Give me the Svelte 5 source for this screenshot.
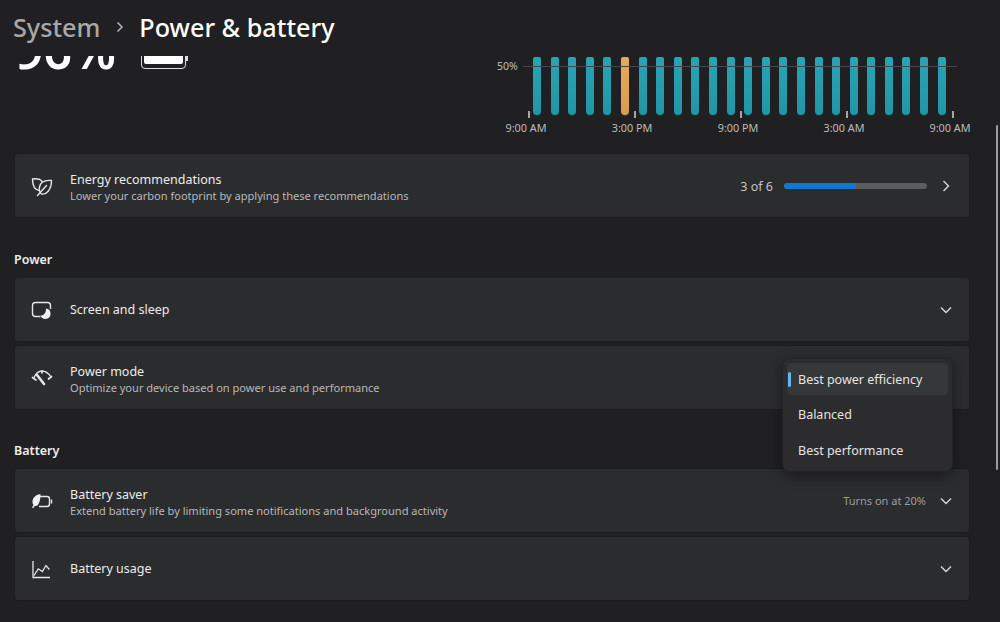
<script>
  const bars = Array.from({ length: 24 }, (_, i) => i);
  const times = ['9:00 AM', '3:00 PM', '9:00 PM', '3:00 AM', '9:00 AM'];
  const options = ['Best power efficiency', 'Balanced', 'Best performance'];
</script>

<div class="page">
  <header class="top">
    <span class="crumb">System</span>
    <svg class="sep" width="12" height="14" viewBox="0 0 12 14"><path d="M3.500 2.500 8 7l-4.500 4.500" fill="none" stroke="#b5b5b5" stroke-width="1.500"/></svg>
    <span class="current">Power &amp; battery</span>
  </header>

  <main class="body">
    <section class="hero">
      <div class="status">
        <span class="pct">96%</span>
        <div class="batt"><div class="batt-fill"></div></div>
      </div>
      <div class="chart">
        <div class="plot">
          <span class="y">50%</span>
          <div class="grid"></div>
          {#each bars as b}
            <div class="bar" class:warm={b === 5}></div>
          {/each}
        </div>
        <div class="ticks">
          {#each times as t}<i></i>{/each}
        </div>
        <div class="times">
          {#each times as t}<span>{t}</span>{/each}
        </div>
      </div>
    </section>

    <div class="card">
      <svg class="ico" viewBox="0 0 22 22" fill="none" stroke="#e6e6e6" stroke-width="1.400" stroke-linejoin="round" stroke-linecap="round">
        <path d="M8.500 15.500C4 15 1.500 11 1.500 4 5 3.500 9 3.500 11 6.500"/>
        <path d="M20.500 5.500C15 5 9.500 6.500 8.500 12c-.5 3 .5 6 2 7 4.500 1 10-4 10-13.500Z"/>
        <path d="M6.500 20.500 15.500 10.500"/>
      </svg>
      <div class="txt">
        <div class="t">Energy recommendations</div>
        <div class="d">Lower your carbon footprint by applying these recommendations</div>
      </div>
      <span class="count">3 of 6</span>
      <div class="track"><div class="fill"></div></div>
      <svg class="chev" viewBox="0 0 12 12"><path d="M3.500 1 8.500 6l-5 5" fill="none" stroke="#d8d8d8" stroke-width="1.400"/></svg>
    </div>

    <h2 class="first">Power</h2>
    <div class="list">
      <div class="card">
        <svg class="ico" viewBox="0 0 22 22" fill="none">
          <path d="M9.500 17.500H4.500a3 3 0 0 1-3-3V6.500a3 3 0 0 1 3-3h12a3 3 0 0 1 3 3V10" stroke="#e6e6e6" stroke-width="1.400"/>
          <path d="M15 9.500a5.200 5.200 0 1 1-5.500 7c3 .3 5.800-2.700 5.500-7Z" fill="#f0f0f0"/>
        </svg>
        <div class="txt"><div class="t">Screen and sleep</div></div>
        <svg class="chev" viewBox="0 0 12 12"><path d="M1 3.500 6 8.500l5-5" fill="none" stroke="#d8d8d8" stroke-width="1.400"/></svg>
      </div>
      <div class="card">
        <svg class="ico" viewBox="0 0 22 22" fill="none" stroke="#e6e6e6" stroke-width="1.300" stroke-linecap="round">
          <path d="M3 10.500C5 6 8 4 11 4s6 1.500 9 5.800"/>
          <path d="M1.500 10.500 5 13M20.500 9.500 17.500 12M11 4v2" stroke-width="1.700"/>
          <path d="M6 8 13 17" stroke-width="2.600"/>
        </svg>
        <div class="txt">
          <div class="t">Power mode</div>
          <div class="d">Optimize your device based on power use and performance</div>
        </div>
        <div class="menu">
          {#each options as o, i}
            <div class="opt" class:on={i === 0}>{o}</div>
          {/each}
        </div>
      </div>
    </div>

    <h2>Battery</h2>
    <div class="list">
      <div class="card">
        <svg class="ico" viewBox="0 0 22 22" fill="none">
          <path d="M9 6.500h7a2.500 2.500 0 0 1 2.500 2.500v5a2.500 2.500 0 0 1-2.500 2.500H8" stroke="#e6e6e6" stroke-width="1.400"/>
          <path d="M20.500 9.500v4" stroke="#e6e6e6" stroke-width="1.400"/>
          <path d="M9.500 4C4 5 1.500 8 1.500 12c0 1.200.3 2.200 1 3L1 17.500l1 .8 1.800-2.300C7.500 17 9.500 11 9.500 4Z" fill="#f0f0f0"/>
        </svg>
        <div class="txt">
          <div class="t">Battery saver</div>
          <div class="d">Extend battery life by limiting some notifications and background activity</div>
        </div>
        <span class="note">Turns on at 20%</span>
        <svg class="chev" viewBox="0 0 12 12"><path d="M1 3.500 6 8.500l5-5" fill="none" stroke="#d8d8d8" stroke-width="1.400"/></svg>
      </div>
      <div class="card">
        <svg class="ico" viewBox="0 0 22 22" fill="none" stroke="#e6e6e6" stroke-width="1.300">
          <path d="M2 3v16.500h17"/>
          <path d="M3 17.500 7.300 10.800l4 2.700L15 7.500l3.300 4"/>
        </svg>
        <div class="txt"><div class="t">Battery usage</div></div>
        <svg class="chev" viewBox="0 0 12 12"><path d="M1 3.500 6 8.500l5-5" fill="none" stroke="#d8d8d8" stroke-width="1.400"/></svg>
      </div>
    </div>
  </main>
  <div class="scroll"></div>
</div>

<style>
  :global(body) { margin: 0; background: #202022; }
  .page {
    position: relative;
    width: 1000px;
    height: 622px;
    overflow: hidden;
    background: #202022;
    color: #e8e8e8;
    font-family: "Noto Sans", "Open Sans", sans-serif;
  }
  .top {
    height: 56px;
    box-sizing: border-box;
    padding: 0 0 2px 13px;
    display: flex;
    align-items: center;
    font-size: 25.200px;
    font-weight: 500;
  }
  .crumb { color: #a8a8a8; }
  .sep { margin: 0 13px 0 14px; }
  .current { color: #fff; }
  .body {
    height: 566px;
    overflow: hidden;
    padding: 0 30px 0 14px;
    box-sizing: border-box;
  }
  .hero {
    height: 97px;
    display: flex;
    justify-content: space-between;
    overflow: hidden;
  }
  .status {
    display: flex;
    align-items: flex-end;
    height: 16px;
    gap: 25px;
    padding-left: 1px;
  }
  .pct {
    font-size: 50px;
    line-height: 50px;
    font-weight: 600;
    color: #fff;
    margin-bottom: -3px;
  }
  .batt {
    position: relative;
    width: 45px;
    height: 30px;
    margin-bottom: 3px;
    border: 1.500px solid #ddd;
    border-radius: 4px;
    padding: 2px 2px 4px;
    box-sizing: border-box;
    display: flex;
  }
  .batt::after {
    content: "";
    position: absolute;
    right: -3px;
    bottom: 7px;
    width: 2px;
    height: 6px;
    background: #ddd;
  }
  .batt-fill { width: 100%; background: #fff; border-radius: 2px; }
  .chart { width: 466px; margin-right: -1px; font-size: 10.800px; color: #bdbdbd; }
  .plot {
    position: relative;
    height: 58px;
    padding-top: 1px;
    margin-left: 28px;
    display: flex;
    gap: 9.600px;
  }
  .y { position: absolute; left: -36px; top: 3px; line-height: 14px; font-size: 10.500px; }
  .grid { position: absolute; left: -10px; width: 434px; top: 10px; height: 1px; background: #47484a; z-index: 1; }
  .bar {
    width: 8px;
    height: 100%;
    background: linear-gradient(#28a4b4, #2296a6);
    border-radius: 2px 2px 4px 4px;
    box-shadow: 0 1px 1px #123a44;
  }
  .bar.warm { background: linear-gradient(#e5aa5c, #d99c50); box-shadow: 0 1px 1px #4a3a22; }
  .ticks {
    display: flex;
    gap: 104.500px;
    padding-left: 23px;
    height: 7px;
    margin-top: -4px;
    position: relative;
  }
  .ticks i { width: 1.500px; height: 7px; background: #a5a5a5; }
  .times {
    display: flex;
    justify-content: space-between;
    margin-top: 3px;
  }
  .times span { width: 42px; white-space: nowrap; line-height: 14px; display: flex; justify-content: center; }

  .card {
    position: relative;
    height: 65px;
    box-sizing: border-box;
    background: #2b2c2e;
    border: 1px solid #1c1c1e;
    border-radius: 4px;
    display: flex;
    align-items: center;
    padding: 0 16px;
  }
  .list { display: flex; flex-direction: column; gap: 3px; }
  .ico { width: 22px; height: 22px; flex: none; margin-right: 17px; }
  .txt { flex: 1; min-width: 0; }
  .txt:has(.d) { padding-top: 2px; }
  .t { font-size: 12.500px; line-height: 17px; color: #ececec; }
  .d { font-size: 11.060px; line-height: 15px; color: #b9b9b9; }
  .count { font-size: 12.500px; color: #c4c4c4; margin-right: 11px; padding-top: 1px; }
  .track { width: 143px; height: 6px; border-radius: 3px; background: #5d5d5d; margin-right: 13px; overflow: hidden; }
  .fill { width: 72px; height: 100%; background: #0f78d4; border-radius: 3px; }
  .chev { width: 12px; height: 12px; flex: none; margin-right: 1px; }
  .note { font-size: 11px; color: #9d9d9d; margin-right: 14px; }
  h2 {
    margin: 0;
    font-size: 12.500px;
    font-weight: 600;
    line-height: 17px;
    padding-top: 32px;
    padding-bottom: 9px;
    color: #ededed;
  }
  h2.first { padding-top: 33px; }
  .menu {
    position: absolute;
    left: 767px;
    top: 12px;
    width: 171px;
    height: 114px;
    box-sizing: border-box;
    padding: 4px 4px;
    background: #2c2c2e;
    border: 1px solid #242426;
    border-radius: 8px;
    box-shadow: 0 4px 14px rgba(0, 0, 0, .4);
    display: flex;
    flex-direction: column;
    gap: 3.500px;
    z-index: 2;
  }
  .opt {
    position: relative;
    height: 32px;
    flex: none;
    display: flex;
    align-items: center;
    padding-left: 11px;
    font-size: 12.500px;
    color: #e4e4e4;
    border-radius: 4px;
  }
  .opt.on { background: #363739; }
  .opt.on::before {
    content: "";
    position: absolute;
    left: 1px;
    top: 9px;
    width: 3px;
    height: 15px;
    border-radius: 2px;
    background: #63b7ec;
  }
  .scroll {
    position: absolute;
    left: 996px;
    top: 125px;
    width: 2px;
    height: 345px;
    background: #9c9c9c;
    border-radius: 1px;
  }
</style>
